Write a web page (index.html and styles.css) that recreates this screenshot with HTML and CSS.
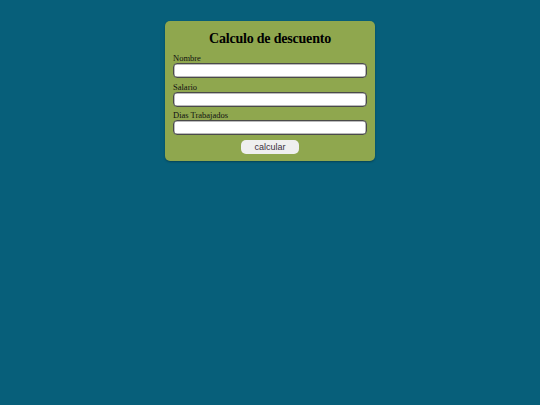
FILE: index.html
```html
<!DOCTYPE html>
<html lang="es">
  <head>
    <meta charset="UTF-8" />
    <meta name="viewport" content="width=device-width, initial-scale=1.0" />
    <title>Calculo de descuento</title>
    <link rel="stylesheet" href="styles.css">
  </head>
  <body>
    <div class="card">
      <h1 class="title">Calculo de descuento</h1>
      <form class="form">
        <label class="label" for="nombre">Nombre</label>
        <input class="field" type="text" id="nombre" />
        <label class="label" for="salario">Salario</label>
        <input class="field" type="text" id="salario" />
        <label class="label" for="dias">Dias Trabajados</label>
        <input class="field" type="text" id="dias" />
        <button class="btn" type="button">calcular</button>
      </form>
    </div>
  </body>
</html>
```

FILE: styles.css
```css
body {
  margin: 0;
  background: #075f7a;
  font-family: "Liberation Serif", "Times New Roman", serif;
  height: 405px;
}

.card {
  width: 194px;
  margin: 21px auto 0;
  padding: 9px 8px 7px;
  background: #8fa74e;
  border-radius: 5px;
  box-shadow: 0 1px 2px rgba(0, 0, 0, 0.3);
}

.title {
  margin: 0 0 6px;
  text-align: center;
  font-size: 14px;
  letter-spacing: -0.2px;
  line-height: 17px;
}

.form {
  display: flex;
  flex-direction: column;
}

.label {
  font-size: 8.5px;
  line-height: 10px;
  color: #111;
}

.field {
  box-sizing: border-box;
  height: 15px;
  margin: 0 0 3.5px;
  border: 1px solid #4a4a4a;
  border-radius: 4px;
  background: #fff;
  box-shadow: inset 0 0 0 0.5px #777;
}

.btn {
  align-self: center;
  width: 58px;
  height: 14px;
  margin-top: 1px;
  padding: 0;
  border: none;
  border-radius: 5px;
  background: #efefef;
  font-family: "Liberation Sans", Arial, sans-serif;
  font-size: 9px;
  color: #3a3040;
}
```
